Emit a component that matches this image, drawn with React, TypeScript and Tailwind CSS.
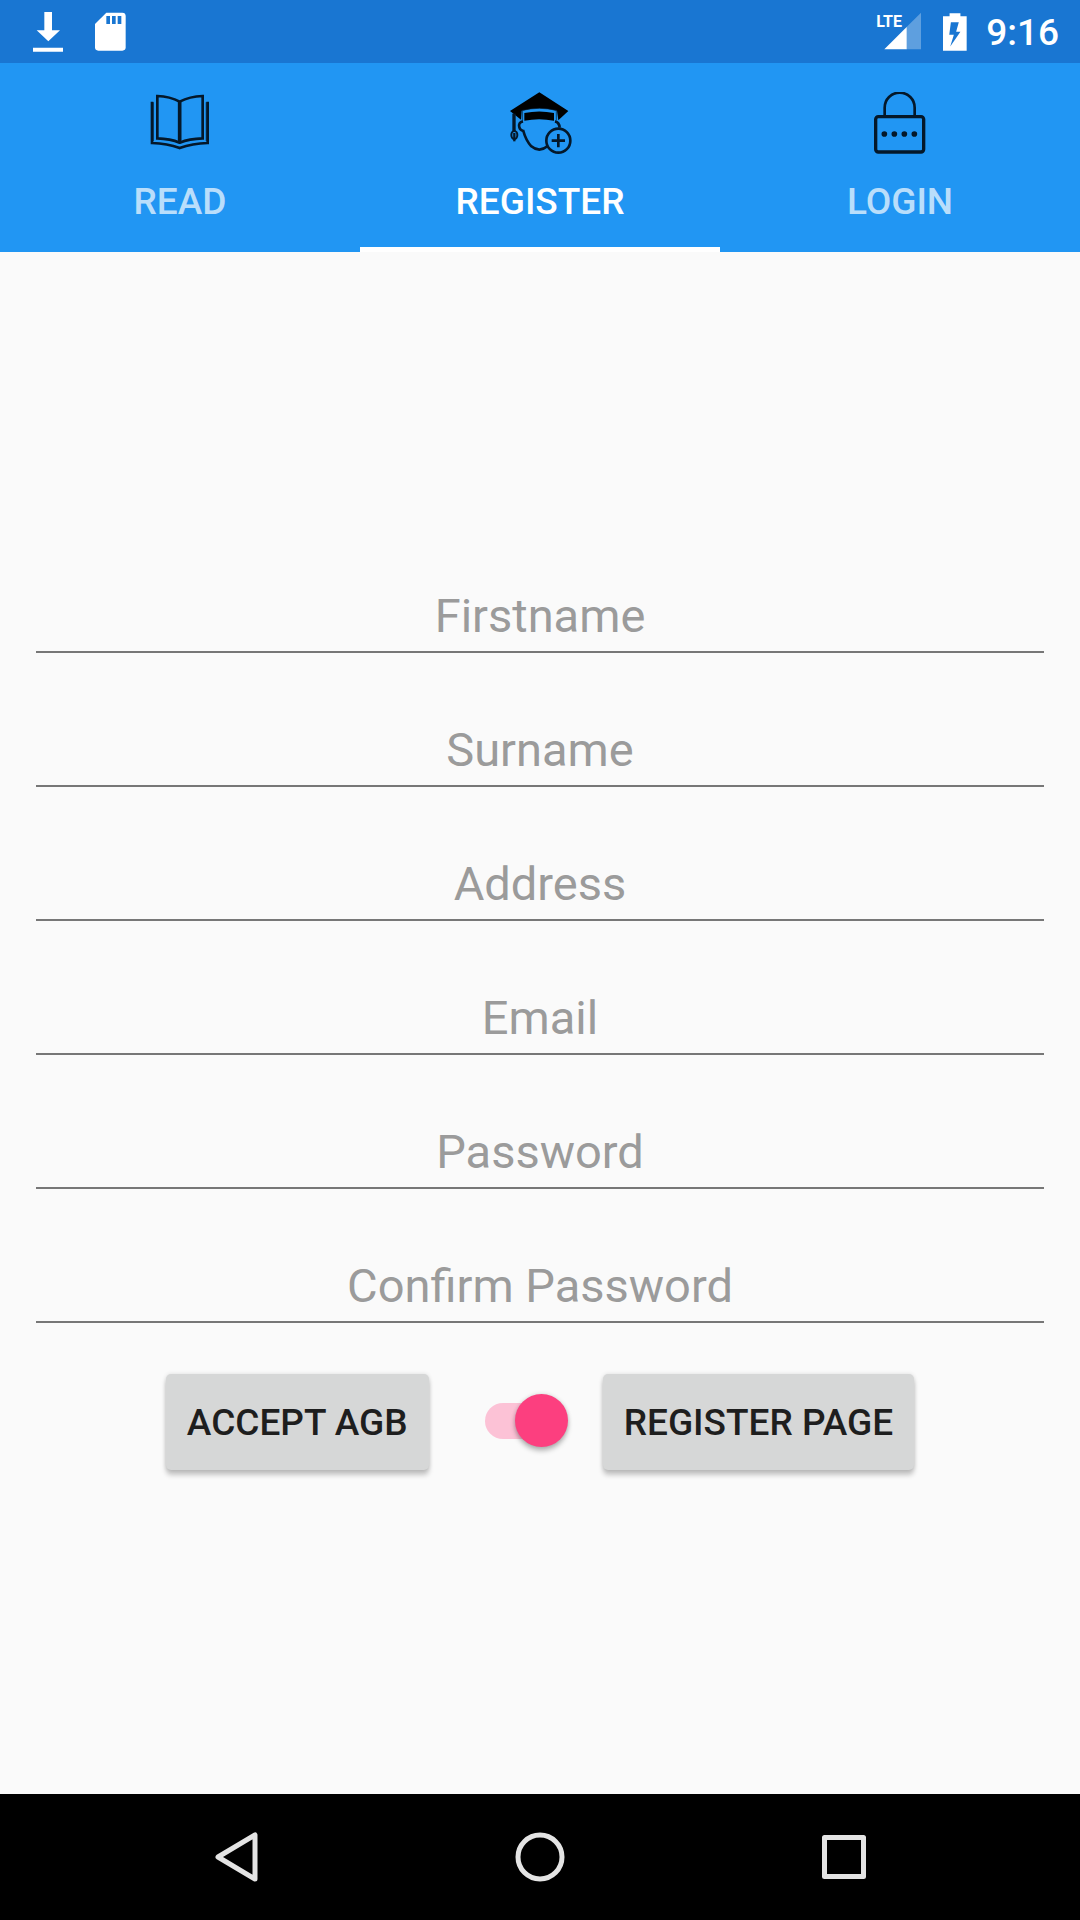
import { useState, type ReactNode } from 'react';

function DownloadIcon() {
  return (
    <svg viewBox="99 36 90 120" className="h-10 w-[30px]" fill="#fff" aria-hidden="true">
      <path d="M133 36h23v55h24l-35 33-35-33h23zM99 143h90v12H99z" />
    </svg>
  );
}

function SdCardIcon() {
  return (
    <svg viewBox="286 36 93 117" className="h-[39px] w-[31px]" aria-hidden="true">
      <path fill="#fff" d="M320 38h48q10 0 10 10v94q0 10-10 10h-72q-10 0-10-10V72z" />
      <path fill="#1976d2" d="M320 48h11v24h-11zM337 48h11v24h-11zM354 48h11v24h-11z" />
    </svg>
  );
}

function SignalIcon() {
  return (
    <div className="relative h-10 w-[46px]">
      <svg viewBox="79 36 138 120" className="h-10 w-[46px]" aria-hidden="true">
        <path fill="#fff" fillOpacity=".3" d="M214 38v110h-44V82z" />
        <path fill="#fff" d="M171 81v67h-67z" />
      </svg>
      <span className="absolute top-0 left-0 font-['Roboto'] text-[16px] leading-[20px] font-bold">LTE</span>
    </div>
  );
}

function BatteryIcon() {
  return (
    <svg viewBox="279 36 73 114" className="h-[38px] w-6" fill="#fff" fillRule="evenodd" aria-hidden="true">
      <path d="M299 36h33v9h19v105h-72V45h20zM303 63l-5 38h14l-11 36 31-45h-13l8-29z" />
    </svg>
  );
}

function BookIcon() {
  return (
    <svg viewBox="86 65 189 189" className="size-[63px]" fill="none" stroke="#04182a" strokeWidth="8" aria-hidden="true">
      <path d="M111 77q38 1 67 17 30-16 69-17v127q-40 1-69 13-28-12-67-13z" />
      <path d="M178 94v123" strokeWidth="11" />
      <path d="M95 94v124q46 1 83 15 38-14 84-15V94" />
      <path d="M99 96v116M258 96v116" strokeWidth="4" strokeOpacity=".6" />
    </svg>
  );
}

function GraduateIcon() {
  return (
    <svg viewBox="207 65 189 189" className="size-[63px]" fill="none" stroke="#04182a" strokeWidth="6" aria-hidden="true">
      <path fill="#000" stroke="none" d="M298 66l87 56-30 28-4-29q-53-15-106 0l-2 27-33-26z" />
      <path fill="#000" stroke="none" d="M253 128q45-9 89 0v23q-45-9-89 0z" />
      <path d="M247 150v-30q51-12 102 0v30" strokeWidth="2" />
      <path d="M222 130v52" strokeWidth="10" />
      <ellipse cx="223" cy="194" rx="9" ry="12" />
      <path d="M223 188v25" strokeWidth="7" />
      <path d="M249 153q-15 3-11 18 2 9 12 11 8 29 24 46 24 20 48 0M345 153q13 3 14 19" strokeWidth="8" />
      <circle cx="355" cy="211" r="36" strokeWidth="8" />
      <path d="M355 191v40M335 211h40" strokeWidth="8" />
    </svg>
  );
}

function LockIcon() {
  return (
    <svg viewBox="117 65 189 189" className="size-[63px]" fill="none" stroke="#04182a" strokeWidth="8" aria-hidden="true">
      <rect x="137" y="139" width="144" height="106" rx="8" strokeWidth="10" />
      <path d="M164 136v-24a45 45 0 0 1 90 0v24" />
      <path d="M163 191h.1M193 191h.1M223 191h.1M253 191h.1" strokeWidth="17" strokeLinecap="round" />
    </svg>
  );
}

const tabs: { label: string; icon: ReactNode }[] = [
  { label: 'READ', icon: <BookIcon /> },
  { label: 'REGISTER', icon: <GraduateIcon /> },
  { label: 'LOGIN', icon: <LockIcon /> },
];

const fields = [
  { id: 'firstname', label: 'Firstname', type: 'text' },
  { id: 'surname', label: 'Surname', type: 'text' },
  { id: 'address', label: 'Address', type: 'text' },
  { id: 'email', label: 'Email', type: 'email' },
  { id: 'password', label: 'Password', type: 'password' },
  { id: 'confirm', label: 'Confirm Password', type: 'password' },
];

const buttonClass =
  'h-24 rounded-[5px] bg-[#d6d7d7] px-[21px] pt-0.5 text-[37px] leading-[44px] font-medium text-[#1e1e1e] shadow-[0_5px_5px_rgba(0,0,0,0.22),0_0_4px_rgba(0,0,0,0.12)]';

export default function App() {
  const [active, setActive] = useState('REGISTER');
  const [accepted, setAccepted] = useState(true);

  return (
    <div className="flex min-h-screen flex-col bg-[#fafafa] font-['Roboto',sans-serif]">
      <header className="flex h-[63px] items-center justify-between bg-[#1976d2] pr-[21px] pl-[33px] text-white">
        <div className="flex items-center gap-8">
          <DownloadIcon />
          <SdCardIcon />
        </div>
        <div className="flex items-center">
          <SignalIcon />
          <div className="ml-[21px]">
            <BatteryIcon />
          </div>
          <time className="ml-[19px] pt-0.5 text-[37px] leading-[44px] font-medium">9:16</time>
        </div>
      </header>

      <nav role="tablist" className="grid h-[189px] grid-cols-3 bg-[#2196f3]">
        {tabs.map(({ label, icon }) => (
          <button
            key={label}
            type="button"
            role="tab"
            aria-selected={active === label}
            onClick={() => setActive(label)}
            className="relative flex flex-col items-center justify-center gap-[25px] text-[37px] leading-[44px] font-medium text-white/70 aria-selected:text-white"
          >
            {icon}
            {label}
            {active === label && <span className="absolute inset-x-0 bottom-0 h-[5px] bg-white" />}
          </button>
        ))}
      </nav>

      <main className="flex grow flex-col justify-center px-9 pb-[57px]">
        <form onSubmit={(e) => e.preventDefault()}>
          {fields.map(({ id, label, type }) => (
            <div key={id} className="flex h-[134px] items-end">
              <input
                id={id}
                type={type}
                aria-label={label}
                placeholder={label}
                className="h-[66px] w-full border-b-2 border-[#777] bg-transparent pb-2 text-center text-[47px] leading-[56px] text-[#1e1e1e] outline-none placeholder:text-[#9b9b9b]"
              />
            </div>
          ))}
          <div className="mt-[51px] flex items-center justify-center">
            <button type="button" className={buttonClass}>
              ACCEPT AGB
            </button>
            <input
              type="checkbox"
              role="switch"
              aria-label="Accept AGB"
              checked={accepted}
              onChange={(e) => setAccepted(e.target.checked)}
              className="relative mr-[35px] mb-[3px] ml-14 h-[53px] w-[83px] shrink-0 appearance-none before:absolute before:top-[9px] before:left-0 before:h-9 before:w-[68px] before:rounded-full before:bg-[#bdbdbd] before:content-[''] after:absolute after:top-0 after:left-0 after:size-[53px] after:rounded-full after:bg-white after:shadow-[0_4px_5px_rgba(0,0,0,0.25),0_0_4px_rgba(0,0,0,0.15)] after:content-[''] checked:before:bg-[#fcc2d6] checked:after:left-[30px] checked:after:bg-[#fc3f7f]"
            />
            <button type="submit" className={buttonClass}>
              REGISTER PAGE
            </button>
          </div>
        </form>
      </main>

      <footer className="grid h-[126px] grid-cols-3 items-center justify-items-center bg-black px-[84px]">
        <button type="button" aria-label="Back">
          <svg viewBox="0 0 50 50" className="size-[50px]" fill="none" stroke="#e4e4e4" strokeWidth="5" strokeLinejoin="round">
            <path d="M44 3v44L7 25z" />
          </svg>
        </button>
        <button type="button" aria-label="Home">
          <svg viewBox="0 0 50 50" className="size-[50px]" fill="none" stroke="#e4e4e4" strokeWidth="5">
            <circle cx="25" cy="25" r="22" />
          </svg>
        </button>
        <button type="button" aria-label="Overview">
          <svg viewBox="0 0 50 50" className="size-[50px]" fill="none" stroke="#e4e4e4" strokeWidth="5" strokeLinejoin="round">
            <path d="M5.5 5.5h39v39h-39z" />
          </svg>
        </button>
      </footer>
    </div>
  );
}
